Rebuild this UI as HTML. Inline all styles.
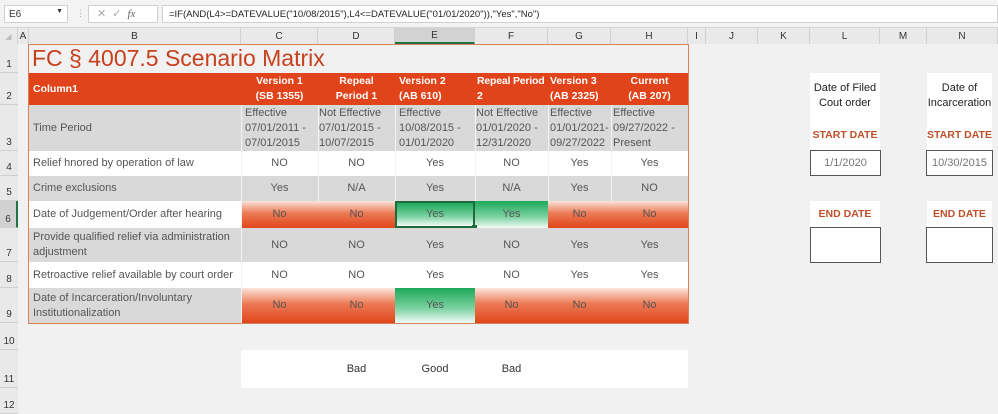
<!DOCTYPE html>
<html><head><meta charset="utf-8"><style>
*{box-sizing:border-box;margin:0;padding:0}
body{width:998px;height:414px;overflow:hidden;background:#f1f1f1;font-family:"Liberation Sans",sans-serif;font-size:11px;color:#555;position:relative}
.a{position:absolute}
.c{position:absolute;display:flex;align-items:center;justify-content:center;text-align:center;line-height:15px;white-space:nowrap}
.l{justify-content:flex-start;text-align:left;padding-left:4px}
.g{background:#d9d9d9}
.w{background:#fff}
.r{background:linear-gradient(#fbe4dc,#ec7a55 45%,#e0461b)}
.gr{background:linear-gradient(#1ca95b,#7fd3a3 60%,#f4fbf7)}
.hd{background:#e1441a;color:#fff;font-weight:bold;font-size:10.5px}
.vl{position:absolute;width:1px;background:#f3f3f3}
.ch{position:absolute;top:28px;height:16px;font-size:10px;color:#333;display:flex;align-items:center;justify-content:center;border-right:1px solid #d0d0d0;background:#e9e9e9}
.rh{position:absolute;left:0;width:18px;font-size:10px;color:#333;display:flex;align-items:flex-end;justify-content:center;padding-bottom:2px;border-bottom:1px solid #d0d0d0;background:#e9e9e9}
.sd{color:#c0502a;font-weight:bold;font-size:10.5px}
</style></head><body>
<div class="a" style="left:0;top:0;width:998px;height:28px;background:#f3f3f3;border-bottom:1px solid #d4d4d4"></div>
<div class="a" style="left:4px;top:5px;width:64px;height:18px;background:#fff;border:1px solid #d0d0d0;font-size:10px;color:#333;padding:3px 4px">E6<span style="position:absolute;right:4px;top:2px;font-size:7px">▼</span></div>
<div class="a" style="left:76px;top:8px;color:#aaa;font-size:9px">⋮</div>
<div class="a" style="left:88px;top:5px;width:70px;height:18px;background:#fff;border:1px solid #d0d0d0;color:#aaa;font-size:11px;padding:1px 0 0 8px;letter-spacing:6px">✕✓<i style="font-family:'Liberation Serif',serif;color:#666;letter-spacing:0">fx</i></div>
<div class="a" style="left:162px;top:5px;width:836px;height:18px;background:#fff;border:1px solid #d0d0d0;font-size:9.5px;color:#222;padding:3px 6px;white-space:nowrap">=IF(AND(L4&gt;=DATEVALUE("10/08/2015"),L4&lt;=DATEVALUE("01/01/2020")),"Yes","No")</div>
<div class="ch" style="left:0;width:18px"><span style="color:#bbb;font-size:8px">◢</span></div>
<div class="ch" style="left:18px;width:11px">A</div>
<div class="ch" style="left:29px;width:212px">B</div>
<div class="ch" style="left:241px;width:77px">C</div>
<div class="ch" style="left:318px;width:77px">D</div>
<div class="ch" style="left:395px;width:80px;background:#d2d2d2;border-bottom:2px solid #217346">E</div>
<div class="ch" style="left:475px;width:73px">F</div>
<div class="ch" style="left:548px;width:63px">G</div>
<div class="ch" style="left:611px;width:77px">H</div>
<div class="ch" style="left:688px;width:18px">I</div>
<div class="ch" style="left:706px;width:52px">J</div>
<div class="ch" style="left:758px;width:52px">K</div>
<div class="ch" style="left:810px;width:70px">L</div>
<div class="ch" style="left:880px;width:47px">M</div>
<div class="ch" style="left:927px;width:71px">N</div>
<div class="rh" style="top:44px;height:29px">1</div>
<div class="rh" style="top:73px;height:32px">2</div>
<div class="rh" style="top:105px;height:46px">3</div>
<div class="rh" style="top:151px;height:25px">4</div>
<div class="rh" style="top:176px;height:25px">5</div>
<div class="rh" style="top:201px;height:27px;background:#d2d2d2;border-right:2px solid #217346">6</div>
<div class="rh" style="top:228px;height:34px">7</div>
<div class="rh" style="top:262px;height:26px">8</div>
<div class="rh" style="top:288px;height:35px">9</div>
<div class="rh" style="top:323px;height:27px">10</div>
<div class="rh" style="top:350px;height:38px">11</div>
<div class="rh" style="top:388px;height:26px">12</div>

<div class="a" style="left:32px;top:45px;font-size:23px;color:#c7401c;white-space:nowrap">FC § 4007.5 Scenario Matrix</div>
<div class="c hd l" style="left:29px;top:73px;width:212px;height:32px">Column1</div>
<div class="c hd" style="left:241px;top:73px;width:77px;height:32px">Version 1<br>(SB 1355)</div>
<div class="c hd" style="left:318px;top:73px;width:77px;height:32px">Repeal<br>Period 1</div>
<div class="c hd l" style="left:395px;top:73px;width:80px;height:32px">Version 2<br>(AB 610)</div>
<div class="c hd l" style="left:475px;top:73px;width:73px;height:32px;padding-left:2px;letter-spacing:-0.2px">Repeal Period<br>2</div>
<div class="c hd l" style="left:548px;top:73px;width:63px;height:32px;padding-left:2px">Version 3<br>(AB 2325)</div>
<div class="c hd" style="left:611px;top:73px;width:77px;height:32px">Current<br>(AB 207)</div>
<div class="c g l" style="left:29px;top:105px;width:212px;height:46px">Time Period</div>
<div class="c g l" style="left:241px;top:105px;width:77px;height:46px">Effective<br>07/01/2011 -<br>07/01/2015</div>
<div class="c g l" style="left:318px;top:105px;width:77px;height:46px;padding-left:1px">Not Effective<br>07/01/2015 -<br>10/07/2015</div>
<div class="c g l" style="left:395px;top:105px;width:80px;height:46px">Effective<br>10/08/2015 -<br>01/01/2020</div>
<div class="c g l" style="left:475px;top:105px;width:73px;height:46px;padding-left:1px">Not Effective<br>01/01/2020 -<br>12/31/2020</div>
<div class="c g l" style="left:548px;top:105px;width:63px;height:46px;padding-left:2px">Effective<br>01/01/2021-<br>09/27/2022</div>
<div class="c g l" style="left:611px;top:105px;width:77px;height:46px;padding-left:2px">Effective<br>09/27/2022 -<br>Present</div>
<div class="c w l" style="left:29px;top:151px;width:212px;height:25px">Relief hnored by operation of law</div>
<div class="c w" style="left:241px;top:151px;width:77px;height:25px">NO</div>
<div class="c w" style="left:318px;top:151px;width:77px;height:25px">NO</div>
<div class="c w" style="left:395px;top:151px;width:80px;height:25px">Yes</div>
<div class="c w" style="left:475px;top:151px;width:73px;height:25px">NO</div>
<div class="c w" style="left:548px;top:151px;width:63px;height:25px">Yes</div>
<div class="c w" style="left:611px;top:151px;width:77px;height:25px">Yes</div>
<div class="c g l" style="left:29px;top:176px;width:212px;height:25px">Crime exclusions</div>
<div class="c g" style="left:241px;top:176px;width:77px;height:25px">Yes</div>
<div class="c g" style="left:318px;top:176px;width:77px;height:25px">N/A</div>
<div class="c g" style="left:395px;top:176px;width:80px;height:25px">Yes</div>
<div class="c g" style="left:475px;top:176px;width:73px;height:25px">N/A</div>
<div class="c g" style="left:548px;top:176px;width:63px;height:25px">Yes</div>
<div class="c g" style="left:611px;top:176px;width:77px;height:25px">NO</div>
<div class="c w l" style="left:29px;top:201px;width:212px;height:27px">Date of Judgement/Order after hearing</div>
<div class="c r" style="left:241px;top:201px;width:77px;height:27px">No</div>
<div class="c r" style="left:318px;top:201px;width:77px;height:27px">No</div>
<div class="c gr" style="left:395px;top:201px;width:80px;height:27px;border:2px solid #1e6b3f">Yes</div>
<div class="c gr" style="left:475px;top:201px;width:73px;height:27px">Yes</div>
<div class="c r" style="left:548px;top:201px;width:63px;height:27px">No</div>
<div class="c r" style="left:611px;top:201px;width:77px;height:27px">No</div>
<div class="a" style="left:472px;top:225px;width:5px;height:5px;background:#1e6b3f"></div>
<div class="c g l" style="left:29px;top:228px;width:212px;height:34px">Provide qualified relief via administration<br>adjustment</div>
<div class="c g" style="left:241px;top:228px;width:77px;height:34px">NO</div>
<div class="c g" style="left:318px;top:228px;width:77px;height:34px">NO</div>
<div class="c g" style="left:395px;top:228px;width:80px;height:34px">Yes</div>
<div class="c g" style="left:475px;top:228px;width:73px;height:34px">NO</div>
<div class="c g" style="left:548px;top:228px;width:63px;height:34px">Yes</div>
<div class="c g" style="left:611px;top:228px;width:77px;height:34px">Yes</div>
<div class="c w l" style="left:29px;top:262px;width:212px;height:26px">Retroactive relief available by court order</div>
<div class="c w" style="left:241px;top:262px;width:77px;height:26px">NO</div>
<div class="c w" style="left:318px;top:262px;width:77px;height:26px">NO</div>
<div class="c w" style="left:395px;top:262px;width:80px;height:26px">Yes</div>
<div class="c w" style="left:475px;top:262px;width:73px;height:26px">NO</div>
<div class="c w" style="left:548px;top:262px;width:63px;height:26px">Yes</div>
<div class="c w" style="left:611px;top:262px;width:77px;height:26px">Yes</div>
<div class="c g l" style="left:29px;top:288px;width:212px;height:35px">Date of Incarceration/Involuntary<br>Institutionalization</div>
<div class="c r" style="left:241px;top:288px;width:77px;height:35px">No</div>
<div class="c r" style="left:318px;top:288px;width:77px;height:35px">No</div>
<div class="c gr" style="left:395px;top:288px;width:80px;height:35px">Yes</div>
<div class="c r" style="left:475px;top:288px;width:73px;height:35px">No</div>
<div class="c r" style="left:548px;top:288px;width:63px;height:35px">No</div>
<div class="c r" style="left:611px;top:288px;width:77px;height:35px">No</div>
<div class="vl" style="left:318px;top:105px;height:96px"></div>
<div class="vl" style="left:395px;top:105px;height:96px"></div>
<div class="vl" style="left:475px;top:105px;height:96px"></div>
<div class="vl" style="left:548px;top:105px;height:96px"></div>
<div class="vl" style="left:611px;top:105px;height:96px"></div>
<div class="vl" style="left:241px;top:105px;height:218px"></div>
<div class="a" style="left:28px;top:44px;width:661px;height:280px;border:1px solid #d9825a;pointer-events:none"></div>
<div class="a" style="left:241px;top:350px;width:447px;height:38px;background:#fff"></div>
<div class="c" style="left:318px;top:350px;width:77px;height:38px;color:#333">Bad</div>
<div class="c" style="left:395px;top:350px;width:80px;height:38px;color:#333">Good</div>
<div class="c" style="left:475px;top:350px;width:73px;height:38px;color:#333">Bad</div>
<div class="c" style="left:810px;top:73px;width:70px;height:46px;background:#fff;color:#222">Date of Filed<br>Cout order</div>
<div class="c sd" style="left:810px;top:119px;width:70px;height:32px;background:#fff">START DATE</div>
<div class="c" style="left:810px;top:150px;width:71px;height:26px;background:#fff;border:1px solid #555;color:#777">1/1/2020</div>
<div class="c sd" style="left:810px;top:201px;width:70px;height:27px;background:#fff">END DATE</div>
<div class="c" style="left:810px;top:227px;width:71px;height:36px;background:#fff;border:1px solid #555"></div>
<div class="c" style="left:927px;top:73px;width:65px;height:46px;background:#fff;color:#222">Date of<br>Incarceration</div>
<div class="c sd" style="left:927px;top:119px;width:65px;height:32px;background:#fff">START DATE</div>
<div class="c" style="left:926px;top:150px;width:67px;height:26px;background:#fff;border:1px solid #555;color:#777">10/30/2015</div>
<div class="c sd" style="left:927px;top:201px;width:65px;height:27px;background:#fff">END DATE</div>
<div class="c" style="left:926px;top:227px;width:67px;height:36px;background:#fff;border:1px solid #555"></div>
</body></html>
